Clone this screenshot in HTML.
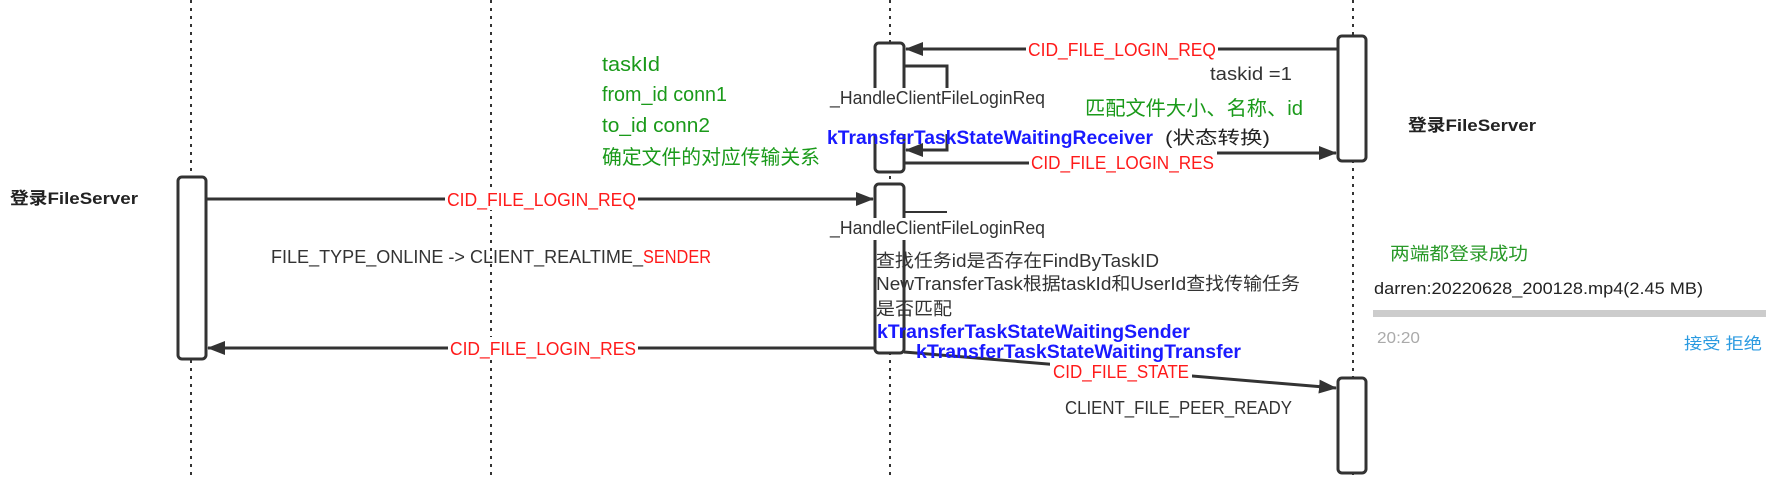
<!DOCTYPE html>
<html><head><meta charset="utf-8"><style>
html,body{margin:0;padding:0;background:#fff;}
svg{display:block;}
text{font-family:"Liberation Sans","Noto Sans CJK SC",sans-serif;}
</style></head><body>
<svg width="1772" height="480" viewBox="0 0 1772 480" xmlns="http://www.w3.org/2000/svg">
<defs>
<marker id="ah2" markerWidth="18" markerHeight="14" refX="17" refY="7" orient="auto" markerUnits="userSpaceOnUse">
<path d="M0,0 L18,7 L0,14 Z" fill="#333"/></marker>
</defs>
<g stroke="#333" stroke-width="2" stroke-dasharray="3,5">
<line x1="191" y1="0" x2="191" y2="480"/>
<line x1="491" y1="0" x2="491" y2="480"/>
<line x1="890" y1="0" x2="890" y2="480"/>
<line x1="1353" y1="0" x2="1353" y2="480"/>
</g>
<g fill="#fff" stroke="#333" stroke-width="3">
<rect x="178" y="177" width="28" height="182" rx="4"/>
<rect x="875" y="43" width="29" height="129" rx="4"/>
<rect x="875" y="184" width="29" height="169" rx="4"/>
<rect x="1338" y="36" width="28" height="125" rx="4"/>
<rect x="1338" y="378" width="28" height="95" rx="4"/>
</g>
<g stroke="#333" stroke-width="3" fill="none">
<line x1="1338" y1="49" x2="906" y2="49" marker-end="url(#ah2)"/>
<polyline points="904,66 947,66 947,150 906,150" marker-end="url(#ah2)"/>
<line x1="904" y1="163" x2="1030" y2="163"/>
<line x1="1215" y1="153" x2="1336" y2="153" marker-end="url(#ah2)"/>
<line x1="206" y1="199" x2="873" y2="199" marker-end="url(#ah2)"/>
<polyline points="904,212 947,212" stroke-width="2"/>
<line x1="875" y1="348" x2="208" y2="348" marker-end="url(#ah2)"/>
<line x1="904" y1="352" x2="1336" y2="388" marker-end="url(#ah2)"/>
</g>
<g fill="#fff">
<rect x="1026" y="38" width="192" height="22"/>
<rect x="1029" y="150" width="188" height="24"/>
<rect x="445" y="188" width="193" height="22"/>
<rect x="448" y="337" width="190" height="22"/>
<rect x="1050" y="362" width="142" height="22"/>
<rect x="830" y="88" width="215" height="46"/>
<rect x="830" y="218" width="215" height="22"/>
</g>
<g font-size="18" fill="#ff1a1a">
<text x="1028" y="56" textLength="188" lengthAdjust="spacingAndGlyphs">CID_FILE_LOGIN_REQ</text>
<text x="1031" y="169" textLength="183" lengthAdjust="spacingAndGlyphs">CID_FILE_LOGIN_RES</text>
<text x="447" y="206" textLength="189" lengthAdjust="spacingAndGlyphs">CID_FILE_LOGIN_REQ</text>
<text x="450" y="355" textLength="186" lengthAdjust="spacingAndGlyphs">CID_FILE_LOGIN_RES</text>
<text x="1053" y="378" textLength="136" lengthAdjust="spacingAndGlyphs">CID_FILE_STATE</text>
</g>
<g font-size="17" font-weight="bold" fill="#222">
<text x="10" y="204" textLength="128" lengthAdjust="spacingAndGlyphs">登录FileServer</text>
<text x="1408" y="131" textLength="128" lengthAdjust="spacingAndGlyphs">登录FileServer</text>
</g>
<g font-size="20" fill="#1a9a1a">
<text x="602" y="71" textLength="58" lengthAdjust="spacingAndGlyphs">taskId</text>
<text x="602" y="101" textLength="125" lengthAdjust="spacingAndGlyphs">from_id conn1</text>
<text x="602" y="132" textLength="108" lengthAdjust="spacingAndGlyphs">to_id conn2</text>
<text x="602" y="164" textLength="218" lengthAdjust="spacingAndGlyphs">确定文件的对应传输关系</text>
<text x="1085" y="115" textLength="218" lengthAdjust="spacingAndGlyphs">匹配文件大小、名称、id</text>
</g>
<g font-size="18" fill="#333">
<text x="830" y="104" textLength="215" lengthAdjust="spacingAndGlyphs">_HandleClientFileLoginReq</text>
<text x="830" y="234" textLength="215" lengthAdjust="spacingAndGlyphs">_HandleClientFileLoginReq</text>
<text x="1210" y="80" textLength="82" lengthAdjust="spacingAndGlyphs">taskid =1</text>
<text x="271" y="263" textLength="372" lengthAdjust="spacingAndGlyphs">FILE_TYPE_ONLINE -&gt; CLIENT_REALTIME_</text>
<text x="643" y="263" textLength="68" lengthAdjust="spacingAndGlyphs" fill="#ff1a1a">SENDER</text>
<text x="876" y="267" textLength="283" lengthAdjust="spacingAndGlyphs">查找任务id是否存在FindByTaskID</text>
<text x="876" y="290" textLength="424" lengthAdjust="spacingAndGlyphs">NewTransferTask根据taskId和UserId查找传输任务</text>
<text x="876" y="315" textLength="76" lengthAdjust="spacingAndGlyphs">是否匹配</text>
<text x="1065" y="414" textLength="227" lengthAdjust="spacingAndGlyphs">CLIENT_FILE_PEER_READY</text>
<text x="1165" y="144" textLength="105" lengthAdjust="spacingAndGlyphs" fill="#222">(状态转换)</text>
</g>
<g font-size="19" font-weight="bold" fill="#1a1aff">
<text x="827" y="144" textLength="326" lengthAdjust="spacingAndGlyphs">kTransferTaskStateWaitingReceiver</text>
<text x="877" y="338" textLength="313" lengthAdjust="spacingAndGlyphs">kTransferTaskStateWaitingSender</text>
<text x="916" y="358" textLength="325" lengthAdjust="spacingAndGlyphs">kTransferTaskStateWaitingTransfer</text>
</g>
<text x="1390" y="260" font-size="18" fill="#2a9a2a" textLength="138" lengthAdjust="spacingAndGlyphs">两端都登录成功</text>
<text x="1374" y="294" font-size="17" fill="#222" textLength="329" lengthAdjust="spacingAndGlyphs">darren:20220628_200128.mp4(2.45 MB)</text>
<rect x="1373" y="310" width="393" height="7" fill="#ccc"/>
<text x="1377" y="343" font-size="16" fill="#aaa" textLength="43" lengthAdjust="spacingAndGlyphs">20:20</text>
<text x="1684" y="349" font-size="16" fill="#2a9ae0" textLength="78" lengthAdjust="spacingAndGlyphs">接受 拒绝</text>
</svg>
</body></html>
